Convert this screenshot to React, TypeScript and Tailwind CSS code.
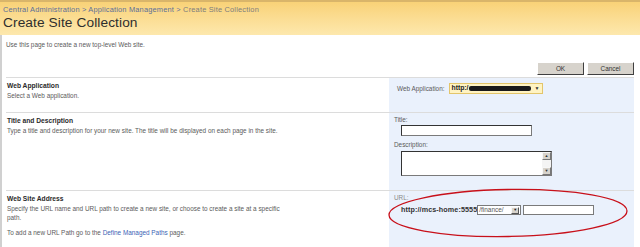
export default function App() {
  return (
    <div className="relative w-[640px] h-[247px] overflow-hidden bg-white text-[#5b5b5b] font-['Liberation_Sans',Arial,sans-serif]">
      {/* Header */}
      <div className="h-[35px] border-t-2 border-[#d9b56a] bg-gradient-to-b from-[#f9d277] to-[#fde8ad] pl-[3px] pt-[3px]">
        <div className="text-[7.4px] leading-[10px] tracking-[0.2px] text-[#5a6f9a]">
          Central Administration &gt; Application Management &gt; <span className="text-[#7d7d7d]">Create Site Collection</span>
        </div>
        <div className="text-[13.7px] leading-[16px] text-[#2e2e2e] tracking-[0.1px]">Create Site Collection</div>
      </div>

      {/* Body */}
      <div className="border-l-2 border-[#d0d0d0] h-[212px] pl-[4px] pr-[6px]">
        <div className="pt-[6px] text-[6.4px] leading-[8px]">Use this page to create a new top-level Web site.</div>

        <div className="flex justify-end gap-[3px] mt-[13px]">
          <button className="w-[47px] h-[13px] bg-[#d7d3cc] border border-t-white border-l-white border-r-[#404040] border-b-[#404040] text-[6.4px] text-[#333]">OK</button>
          <button className="w-[47px] h-[13px] bg-[#d7d3cc] border border-t-white border-l-white border-r-[#404040] border-b-[#404040] text-[6.4px] text-[#333]">Cancel</button>
        </div>

        <div className="mt-[2px] border-t border-[#dcdcdc]">
          {/* Web Application */}
          <div className="flex h-[35px] border-b border-[#dcdcdc]">
            <div className="w-[383px] pl-[1px] pt-[3px]">
              <div className="text-[6.7px] leading-[9px] font-bold text-[#2a2a2a]">Web Application</div>
              <div className="text-[6.4px] leading-[8px] mt-[2px]">Select a Web application.</div>
            </div>
            <div className="flex-1 bg-[#eaf1fc] flex items-start pt-[5px] pl-[8px] gap-[4px]">
              <span className="text-[6.4px] leading-[10px] mt-[1px]">Web Application:</span>
              <div className="flex items-center w-[94px] h-[11px] bg-[#fff3c2] border border-[#e3c56b] px-[2px]">
                <span className="text-[6.8px] font-bold text-[#222]">http:/</span>
                <span className="ml-[1px] w-[62px] h-[5px] bg-[#1a1a1a] rounded-[2px]" />
                <span className="ml-auto text-[5px] text-[#333]">▼</span>
              </div>
            </div>
          </div>

          {/* Title and Description */}
          <div className="flex h-[78px] border-b border-[#dcdcdc]">
            <div className="w-[383px] pl-[1px] pt-[3px]">
              <div className="text-[6.7px] leading-[9px] font-bold text-[#2a2a2a]">Title and Description</div>
              <div className="text-[6.4px] leading-[8px] mt-[2px]">Type a title and description for your new site. The title will be displayed on each page in the site.</div>
            </div>
            <div className="flex-1 bg-[#eaf1fc] pl-[5px] pt-[3px]">
              <div className="text-[6.4px] leading-[8px]">Title:</div>
              <div className="ml-[7px] mt-[1px] w-[131px] h-[11px] bg-white border border-[#7a7a7a] border-t-[#333] border-l-[#333]" />
              <div className="text-[6.4px] leading-[8px] mt-[5px]">Description:</div>
              <div className="ml-[7px] mt-[2px] w-[151px] h-[25px] bg-white border border-[#7a7a7a] border-t-[#333] border-l-[#333] flex justify-end">
                <div className="w-[9px] flex flex-col justify-between bg-[#f4f4f4]">
                  <div className="h-[8px] bg-[#d7d3cc] border border-[#f7f7f7] border-r-[#777] border-b-[#777] flex items-center justify-center text-[4px] text-[#333]">▲</div>
                  <div className="h-[8px] bg-[#d7d3cc] border border-[#f7f7f7] border-r-[#777] border-b-[#777] flex items-center justify-center text-[4px] text-[#333]">▼</div>
                </div>
              </div>
            </div>
          </div>

          {/* Web Site Address */}
          <div className="flex h-[57px] border-b border-[#dcdcdc]">
            <div className="w-[383px] pl-[1px] pt-[3px]">
              <div className="text-[6.7px] leading-[9px] font-bold text-[#2a2a2a]">Web Site Address</div>
              <div className="text-[6.4px] leading-[9px] mt-[1px] w-[276px]">Specify the URL name and URL path to create a new site, or choose to create a site at a specific path.</div>
              <div className="text-[6.4px] leading-[8px] mt-[7px]">
                To add a new URL Path go to the <span className="text-[#3b63b5]">Define Managed Paths</span> page.
              </div>
            </div>
            <div className="flex-1 bg-[#eaf1fc] pl-[5px] pt-[3px]">
              <div className="text-[6.4px] leading-[8px] text-[#8a8a8a]">URL:</div>
              <div className="flex items-center ml-[7px] mt-[3px] h-[10px]">
                <span className="text-[7.2px] font-bold text-[#333] tracking-[0.1px]">http://mcs-home:5555</span>
                <div className="flex items-center w-[44px] h-[10px] bg-white border border-[#7a7a7a]">
                  <span className="pl-[1px] text-[6.4px] text-[#555]">/finance/</span>
                  <span className="ml-auto mr-[1px] w-[8px] h-[7px] bg-[#d7d3cc] border border-[#f7f7f7] border-r-[#555] border-b-[#555] flex items-center justify-center text-[4px] text-[#222]">▼</span>
                </div>
                <div className="ml-[2px] w-[71px] h-[10px] bg-white border border-[#7a7a7a]" />
              </div>
            </div>
          </div>
        </div>
      </div>

      {/* Red annotation ellipse */}
      <svg className="absolute left-[386px] top-[187px]" width="246" height="54" viewBox="0 0 246 54">
        <ellipse cx="122" cy="26" rx="119" ry="23.5" fill="none" stroke="#c8101a" strokeWidth="1.3" transform="rotate(-1 122 26)" />
      </svg>
    </div>
  );
}
